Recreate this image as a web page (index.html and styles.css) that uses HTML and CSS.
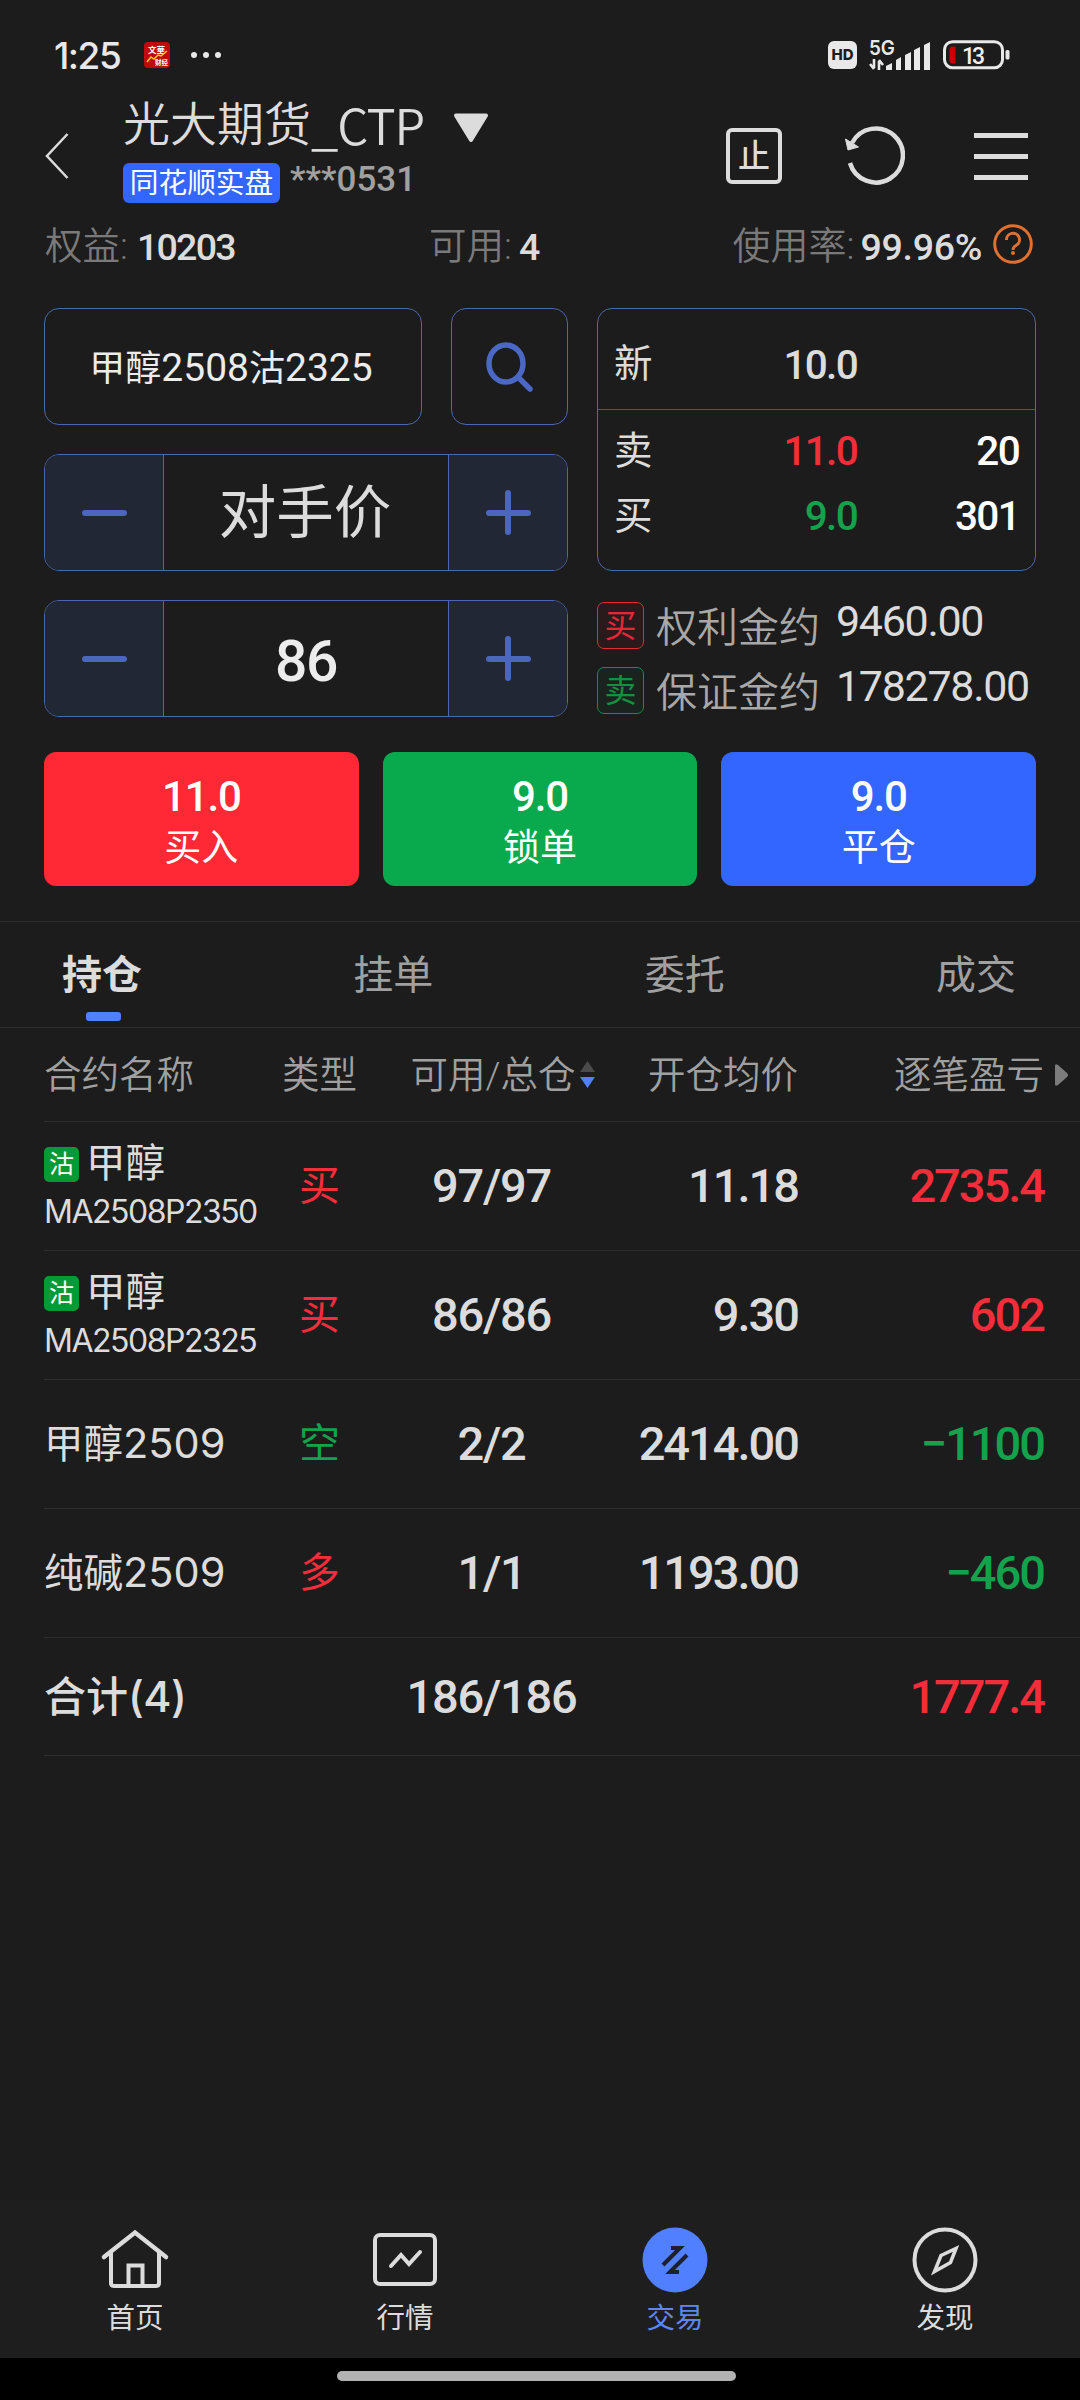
FILE: index.html
```
<!DOCTYPE html>
<html lang="zh-CN">
<head>
<meta charset="utf-8">
<title>光大期货_CTP</title>
<link rel="stylesheet" href="styles.css">
</head>
<body>
<div class="status">
  <span class="clock">1:25</span>
  <svg class="app" width="26" height="26" viewBox="0 0 26 26">
    <rect width="26" height="26" rx="4" fill="#c00a0a"/>
    <text x="4" y="11" font-size="8.5" font-weight="700" fill="#fff">文華</text>
    <text x="11" y="23" font-size="6.5" font-weight="700" fill="#fff">财经</text>
    <path d="M3 20l4-5 3 2 4-4 3 1 6-5" fill="none" stroke="#ffc928" stroke-width="1.5"/>
  </svg>
  <span class="dots"><i></i><i></i><i></i></span>
  <span class="hd">HD</span>
  <svg class="signal" width="61" height="44" viewBox="0 -6 61 44">
    <text x="0" y="16" font-size="20.5" font-weight="600" fill="#e8e8e8" textLength="26" lengthAdjust="spacingAndGlyphs">5G</text>
    <path d="M5 20v9M1 25l4 5M10 31v-9M10 21l4 5" fill="none" stroke="#e8e8e8" stroke-width="2.6"/>
    <path d="M17 31v-4l6-3v7zM27 31V21l5-3v13zM36 31V16l6-3v18zM45 31V11l6-3v23zM55 31V6l6-3v28z" fill="#e8e8e8"/>
  </svg>
  <svg class="battery" width="67" height="30" viewBox="0 0 67 30">
    <rect x="1.5" y="1.7" width="58" height="26" rx="8" fill="none" stroke="#e8e8e8" stroke-width="3"/>
    <path d="M12.500 6.500v17h-2.500q-3.500 0-3.500-3.500v-10q0-3.500 3.500-3.500z" fill="#c80000"/>
    <rect x="62.500" y="10" width="4" height="9.500" rx="1.500" fill="#e8e8e8"/>
    <text x="19" y="23.500" font-size="23" font-weight="500" fill="#f0f0f0" textLength="23">13</text>
  </svg>
</div>

<div class="header">
  <svg class="back" width="24" height="48" viewBox="0 0 24 48"><path d="M22.500 2L2 24l20.500 22" fill="none" stroke="#dcdcdc" stroke-width="2.500"/></svg>
  <div class="account">
    <div class="title">光大期货<span>_CTP</span>
      <svg width="36" height="30" viewBox="0 0 36 30"><path d="M3 2.500h30L18 27z" fill="#dcdcdc" stroke="#dcdcdc" stroke-width="4" stroke-linejoin="round"/></svg>
    </div>
    <div class="sub"><span class="broker">同花顺实盘</span><span class="acct">***0531</span></div>
  </div>
  <div class="tools">
    <span class="stop">止</span>
    <svg class="refresh" width="60" height="60" viewBox="0 0 60 60">
      <path d="M5 37A27 27 0 1 0 7 17" fill="none" stroke="#dcdcdc" stroke-width="4.500"/>
      <path d="M0.500 13l13 8-10.500 3z" fill="#dcdcdc" stroke="#dcdcdc"/>
    </svg>
    <span class="menu"><i></i><i></i><i></i></span>
  </div>
</div>

<div class="funds">
  <span class="fund equity"><label>权益:</label><b>10203</b></span>
  <span class="fund avail"><label>可用:</label><b>4</b></span>
  <span class="fund usage"><label>使用率:</label><b>99.96%</b></span>
  <svg class="help" width="40" height="40" viewBox="0 0 40 40">
    <circle cx="20" cy="20" r="18.300" fill="none" stroke="#e07030" stroke-width="3"/>
    <path d="M13.500 16a6.500 6.500 0 1 1 9.500 5.500q-3 1.500-3 4.500" fill="none" stroke="#e07030" stroke-width="3"/>
    <circle cx="20" cy="29" r="2" fill="#e07030"/>
  </svg>
</div>

<div class="trade">
  <div class="order">
    <div class="pick">
      <div class="box contract">甲醇<em>2508</em>沽<em>2325</em></div>
      <div class="box search">
        <svg width="52" height="56" viewBox="0 0 52 56"><ellipse cx="22" cy="24.500" rx="17" ry="18.500" fill="none" stroke="#4a68c4" stroke-width="5.500"/><path d="M34 38l12 12" stroke="#4a68c4" stroke-width="5.500" stroke-linecap="round"/></svg>
      </div>
    </div>
    <div class="box stepper">
      <div class="key minus"></div>
      <div class="val price">对手价</div>
      <div class="key plus"></div>
    </div>
    <div class="box stepper">
      <div class="key minus"></div>
      <div class="val lots">86</div>
      <div class="key plus"></div>
    </div>
  </div>
  <div class="info">
    <div class="box quote">
      <div class="last"><span>新</span><b>10.0</b><b class="vol"></b></div>
      <div class="depth"><span>卖</span><b class="up">11.0</b><b class="vol">20</b></div>
      <div class="depth"><span>买</span><b class="down">9.0</b><b class="vol">301</b></div>
    </div>
    <div class="cost"><i class="tag buy">买</i><span>权利金约</span><b>9460.00</b></div>
    <div class="cost"><i class="tag sell">卖</i><span>保证金约</span><b>178278.00</b></div>
  </div>
</div>

<div class="actions">
  <div class="btn red"><b>11.0</b><span>买入</span></div>
  <div class="btn green"><b>9.0</b><span>锁单</span></div>
  <div class="btn blue"><b>9.0</b><span>平仓</span></div>
</div>

<div class="tabs">
  <span class="tab active">持仓</span>
  <span class="tab">挂单</span>
  <span class="tab">委托</span>
  <span class="tab">成交</span>
</div>

<div class="table">
  <div class="row head">
    <span class="name">合约名称</span>
    <span class="type">类型</span>
    <span class="qty">可用/总仓
      <svg width="15" height="28" viewBox="0 0 15 28"><path d="M7.500 0L15 11H0z" fill="#4a4a4a"/><path d="M0 16h15L7.500 27z" fill="#5080ff"/></svg>
    </span>
    <span class="avg">开仓均价</span>
    <span class="pnl">逐笔盈亏</span>
    <svg class="more" width="13" height="22" viewBox="0 0 13 22"><path d="M0 2q0-3 3-1l9 8q2 2 0 4l-9 8q-3 2-3-1z" fill="#7c7c7c"/></svg>
  </div>
  <div class="row">
    <div class="name option"><div><i>沽</i>甲醇</div><small>MA2508P2350</small></div>
    <span class="type up">买</span><b class="qty">97/97</b><b class="avg">11.18</b><b class="pnl up">2735.4</b>
  </div>
  <div class="row">
    <div class="name option"><div><i>沽</i>甲醇</div><small>MA2508P2325</small></div>
    <span class="type up">买</span><b class="qty">86/86</b><b class="avg">9.30</b><b class="pnl up">602</b>
  </div>
  <div class="row">
    <div class="name">甲醇<em>2509</em></div>
    <span class="type down">空</span><b class="qty">2/2</b><b class="avg">2414.00</b><b class="pnl down">−1100</b>
  </div>
  <div class="row">
    <div class="name">纯碱<em>2509</em></div>
    <span class="type up">多</span><b class="qty">1/1</b><b class="avg">1193.00</b><b class="pnl down">−460</b>
  </div>
  <div class="row total">
    <div class="name">合计<em>(4)</em></div>
    <span class="type"></span><b class="qty">186/186</b><b class="avg"></b><b class="pnl up">1777.4</b>
  </div>
</div>

<div class="nav">
  <div class="item">
    <svg width="70" height="70" viewBox="0 0 70 70" fill="none" stroke="#dcdcdc" stroke-width="4">
      <path d="M4 32L35 7.500l31 24.500" stroke-width="4.500" stroke-linecap="round"/>
      <path d="M11 27v31q0 3 3 3h42q3 0 3-3V27M28.500 61V40.500h14V61"/>
    </svg>
    <span>首页</span>
  </div>
  <div class="item">
    <svg width="70" height="70" viewBox="0 0 70 70" fill="none" stroke="#dcdcdc" stroke-width="4">
      <rect x="5" y="10" width="60" height="49" rx="5"/>
      <path d="M21 41l10-11 8 9 11-12" stroke-linecap="round"/>
    </svg>
    <span>行情</span>
  </div>
  <div class="item on">
    <svg width="70" height="70" viewBox="0 0 70 70">
      <circle cx="35" cy="35" r="32.500" fill="#5080ff"/>
      <path d="M23 40l17-17h-9M47 30L30 47h9" fill="none" stroke="#1c2030" stroke-width="4"/>
    </svg>
    <span>交易</span>
  </div>
  <div class="item">
    <svg width="70" height="70" viewBox="0 0 70 70" fill="none" stroke="#dcdcdc" stroke-width="4">
      <circle cx="35" cy="35" r="30.500"/>
      <path d="M46 23.500L40.500 37.500l-16 9 6.500-16z" stroke-width="3.500"/>
    </svg>
    <span>发现</span>
  </div>
</div>
<div class="gesture"><i></i></div>
</body>
</html>
```
FILE: styles.css
```
*{
    box-sizing: border-box;
}
body{
    margin: 0;
    width: 1080px;
    height: 2400px;
    display: flex;
    flex-direction: column;
    background: #1c1c1c;
    color: #dcdcdc;
    font-family: Roboto, "Noto Sans CJK SC", sans-serif;
    white-space: nowrap;
    overflow: hidden;
}
b{
    font-weight: 500;
}
i, em{
    font-style: normal;
}
svg{
    display: block;
    flex: none;
}
.up{
    color: #f42d3b;
}
.down{
    color: #14a24c;
}

/* status bar */
.status{
    height: 96px;
    padding: 14px 70px 0 54px;
    display: flex;
    align-items: center;
    color: #e8e8e8;
}
.clock{
    width: 90px;
    font-family: Inter, sans-serif;
    font-size: 37px;
    font-weight: 500;
    letter-spacing: -1.5px;
}
.dots{
    display: flex;
    gap: 6px;
    margin-left: 21px;
}
.dots i{
    width: 6px;
    height: 6px;
    border-radius: 50%;
    background: #e8e8e8;
}
.hd{
    margin-left: auto;
    width: 29px;
    height: 28px;
    border-radius: 6px;
    background: #e8e8e8;
    color: #1c1c1c;
    font: 800 15px/28px Inter, sans-serif;
    text-align: center;
}
.signal{
    margin: 0 13px 0 12px;
    font-family: Inter, sans-serif;
}

/* header */
.header{
    height: 120px;
    display: flex;
    align-items: center;
    padding: 0 52px 0 45px;
}
.account{
    align-self: flex-start;
    margin-left: 54px;
}
.title{
    display: flex;
    align-items: center;
    height: 58px;
    font-size: 47px;
    font-weight: 350;
    line-height: 58px;
}
.title span{
    font-family: "Noto Sans CJK SC", sans-serif;
    font-size: 49px;
    letter-spacing: -1px;
    margin-top: -3px;
}
.title svg{
    margin: 6px 0 0 29px;
}
.sub{
    display: flex;
    margin-top: 9px;
}
.broker{
    width: 157px;
    height: 40px;
    border-radius: 6px;
    background: #3366ff;
    color: #fff;
    font-size: 28.7px;
    line-height: 41px;
    text-align: center;
}
.acct{
    margin-left: 10px;
    color: #a0a0a0;
    font-size: 35px;
    line-height: 34px;
    font-weight: 500;
}
.tools{
    margin-left: auto;
    display: flex;
    align-items: center;
}
.stop{
    width: 56px;
    height: 56px;
    border: 4.500px solid #dcdcdc;
    border-radius: 6px;
    font-size: 32px;
    line-height: 49px;
    text-align: center;
    font-weight: 500;
}
.refresh{
    margin: 0 69px 0 63px;
}
.menu{
    width: 54px;
    display: flex;
    flex-direction: column;
    gap: 16px;
}
.menu i{
    height: 5px;
    background: #dcdcdc;
}

/* account funds */
.funds{
    height: 60px;
    padding: 0 48px 0 45px;
    display: flex;
    align-items: center;
}
.fund{
    display: flex;
    align-items: center;
}
.fund label{
    color: #7a7a7a;
    font-size: 37.500px;
    font-weight: 350;
    line-height: 56px;
}
.fund b{
    font-size: 37.500px;
    letter-spacing: -1.700px;
    line-height: 56px;
    padding-top: 2px;
}
.equity{
    width: 384px;
}
.equity b{
    margin-left: 9px;
}
.avail b{
    margin-left: 7px;
}
.usage{
    margin-left: auto;
}
.usage b{
    margin-left: 6px;
    letter-spacing: -0.300px;
}
.usage label{
    font-size: 38px;
}
.help{
    margin: -5px -1px 0 11px;
}

/* order form */
.trade{
    display: flex;
    gap: 29px;
    margin: 32px 44px 35px;
    height: 409px;
}
.box{
    border: 1px solid #4c67ad;
    border-radius: 15px;
    overflow: hidden;
}
.order{
    width: 524px;
    display: flex;
    flex-direction: column;
    gap: 29px;
}
.pick{
    display: flex;
    gap: 29px;
    height: 117px;
}
.contract{
    flex: 1;
    text-align: center;
    font-size: 36px;
    line-height: 118px;
    padding-right: 4px;
    color: #ececec;
}
.contract em{
    font-size: 39px;
}
.search{
    width: 117px;
    display: flex;
    align-items: center;
    justify-content: center;
}
.stepper{
    display: flex;
    height: 117px;
}
.key{
    width: 118px;
    display: flex;
    align-items: center;
    justify-content: center;
    background: #222736;
    position: relative;
}
.key::before, .plus::after{
    content: "";
    position: absolute;
    width: 45px;
    height: 6px;
    border-radius: 3px;
    background: #4a66bd;
}
.plus::after{
    width: 6px;
    height: 45px;
}
.val{
    flex: 1;
    border: solid #4c67ad;
    border-width: 0 1px;
    text-align: center;
    line-height: 115px;
}
.price{
    font-size: 57.500px;
    line-height: 118px;
    padding-right: 2px;
}
.lots{
    font-size: 57px;
    font-weight: 500;
    letter-spacing: -1.500px;
    line-height: 121px;
    color: #ececec;
}

/* quote */
.info{
    flex: 1;
}
.quote{
    height: 263px;
    margin-bottom: 22px;
}
.last, .depth{
    display: grid;
    grid-template-columns: 60px 184px 162px;
    padding-left: 16px;
    height: 65px;
    line-height: 65px;
    font-size: 38.500px;
}
.last{
    height: 101px;
    line-height: 110px;
    border-bottom: 1px solid #43598f;
    margin-bottom: 8px;
}
.quote b{
    font-size: 40.500px;
    text-align: right;
    letter-spacing: -1.700px;
    padding: 1px 1px 0 0;
}
.quote .vol{
    color: #fff;
}
.cost{
    height: 65px;
    display: flex;
    align-items: center;
}
.tag{
    width: 47px;
    height: 47px;
    border: 1px solid;
    border-radius: 7px;
    font-size: 32px;
    line-height: 47px;
    text-align: center;
}
.buy{
    color: #e62735;
    background: #2b1a1b;
}
.sell{
    color: #12913f;
    background: #1a231d;
}
.cost span{
    width: 180px;
    margin: -3px 0 0 12px;
    font-size: 41px;
    font-weight: 350;
    color: #a8a8a8;
}
.cost b{
    font-size: 43px;
    font-weight: 400;
    letter-spacing: -1.300px;
    margin-top: -9px;
}

/* buy / lock / close */
.actions{
    display: flex;
    gap: 24px;
    margin: 0 44px 35px;
}
.btn{
    flex: 1;
    height: 134px;
    border-radius: 12px;
    color: #fff;
    text-align: center;
    display: flex;
    flex-direction: column;
    padding-top: 19px;
    line-height: 52px;
}
.btn b{
    font-size: 42px;
    letter-spacing: -1.200px;
}
.btn span{
    font-size: 37px;
}
.red{
    background: #ff2835;
}
.green{
    background: #09a94d;
}
.blue{
    background: #3366ff;
}

/* tabs */
.tabs{
    height: 107px;
    border: solid #2d2d2d;
    border-width: 1px 0;
    padding: 0 64px 0 62px;
    display: flex;
    justify-content: space-between;
}
.tab{
    font-size: 40px;
    line-height: 107px;
    height: 105px;
    color: #a0a0a0;
    position: relative;
}
.active{
    color: #dcdcdc;
    font-weight: 700;
}
.active::after{
    content: "";
    position: absolute;
    left: 24px;
    bottom: 6px;
    width: 35px;
    height: 9px;
    border-radius: 3px;
    background: #5080ff;
}

/* positions */
.table{
    margin-left: 44px;
}
.row{
    height: 129px;
    border-bottom: 1px solid #2d2d2d;
    display: grid;
    grid-template-columns: 222px 108px 236px 188px 246px 36px;
    align-items: center;
    line-height: 60px;
}
.row b{
    font-size: 47px;
    letter-spacing: -2px;
}
.type, .qty{
    text-align: center;
}
.avg, .pnl{
    text-align: right;
}
.row .qty{
    letter-spacing: -1.200px;
    padding-right: 1px;
}
.type{
    font-size: 41px;
    padding-right: 1px;
}
.name{
    font-size: 39.500px;
}
.name em{
    font-family: Inter, sans-serif;
    font-size: 41.500px;
}
.option div{
    display: flex;
    align-items: center;
    line-height: 46px;
}
.option i{
    width: 35px;
    height: 35px;
    margin-right: 7px;
    border-radius: 5px;
    background: #069a36;
    color: #fff;
    font-size: 25px;
    line-height: 35px;
    text-align: center;
}
.option small{
    display: block;
    font: 32px/44px Inter, sans-serif;
    letter-spacing: -1.500px;
    margin: 3px 0 -3px;
}
.head{
    height: 94px;
    color: #a0a0a0;
}
.head span{
    font-size: 37.500px;
    font-weight: 350;
}
.head .qty{
    display: flex;
    align-items: center;
    justify-content: center;
    gap: 5px;
    padding: 0 0 0 22px;
    letter-spacing: 0;
}
.head .more{
    margin-left: 11px;
}
.total{
    height: 118px;
}
.total .name{
    font-weight: 500;
    font-size: 42px;
}
.total em{
    font-size: 43px;
    letter-spacing: -0.500px;
}

/* bottom navigation */
.nav{
    margin-top: auto;
    height: 158px;
    padding-top: 25px;
    background: #1e1e1e;
    display: flex;
}
.item{
    flex: 1;
    display: flex;
    flex-direction: column;
    align-items: center;
    font-size: 28.500px;
    line-height: 48px;
}
.on{
    color: #5f86f0;
}
.gesture{
    height: 42px;
    background: #000;
    padding: 13px 0 0 337px;
}
.gesture i{
    display: block;
    width: 399px;
    height: 10px;
    border-radius: 5px;
    background: #b2b2b2;
}
```
